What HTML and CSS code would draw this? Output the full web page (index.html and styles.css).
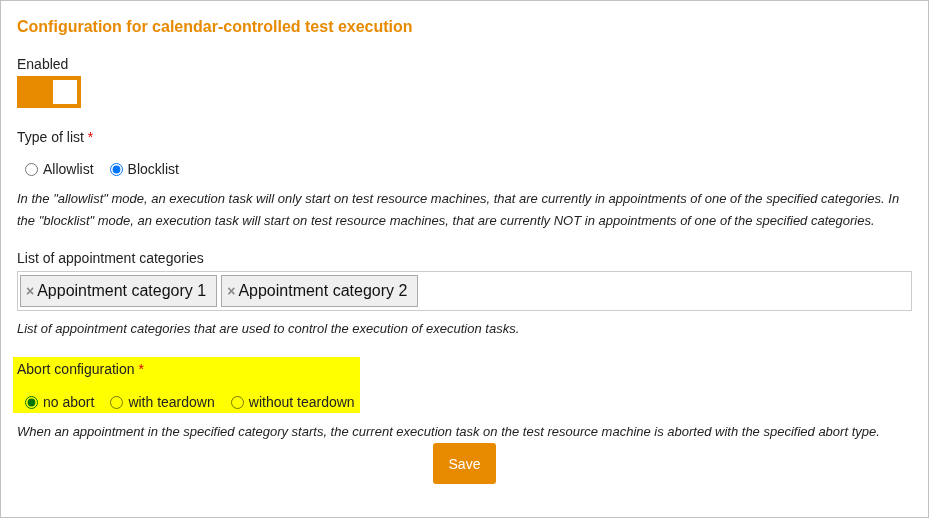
FILE: index.html
```html
<!DOCTYPE html>
<html lang="en">
<head>
<meta charset="utf-8">
<title>Configuration</title>
<link rel="stylesheet" href="styles.css">
</head>
<body>
<div class="panel">
  <h1 class="title">Configuration for calendar-controlled test execution</h1>

  <div class="label label-enabled">Enabled</div>
  <div class="toggle"><span class="knob"></span></div>

  <div class="label label-type">Type of list <span class="req">*</span></div>
  <div class="radio-row">
    <label class="opt"><input type="radio" name="listtype">Allowlist</label>
    <label class="opt"><input type="radio" name="listtype" checked>Blocklist</label>
  </div>
  <p class="desc desc-type">In the "allowlist" mode, an execution task will only start on test resource machines, that are currently in appointments of one of the specified categories. In the "blocklist" mode, an execution task will start on test resource machines, that are currently NOT in appointments of one of the specified categories.</p>

  <div class="label label-list">List of appointment categories</div>
  <div class="tagbox">
    <span class="tag"><span class="tag-x">×</span>Appointment category 1</span>
    <span class="tag"><span class="tag-x">×</span>Appointment category 2</span>
  </div>
  <p class="desc desc-help">List of appointment categories that are used to control the execution of execution tasks.</p>

  <div class="highlight">
    <div class="label">Abort configuration <span class="req">*</span></div>
    <div class="radio-row radio-row-abort">
      <label class="opt"><input type="radio" name="abort" checked>no abort</label>
      <label class="opt"><input type="radio" name="abort">with teardown</label>
      <label class="opt"><input type="radio" name="abort">without teardown</label>
    </div>
  </div>
  <p class="desc desc-abort">When an appointment in the specified category starts, the current execution task on the test resource machine is aborted with the specified abort type.</p>

  <button class="save" type="button">Save</button>
</div>
</body>
</html>
```

FILE: styles.css
```css
html, body {
  margin: 0;
  padding: 0;
  background: #ffffff;
}

body {
  font-family: "Liberation Sans", Arial, sans-serif;
  font-size: 14px;
  line-height: 16px;
  color: #222222;
}

.panel {
  box-sizing: border-box;
  width: 929px;
  height: 518px;
  border: 1px solid #c0c0c0;
  padding: 17px 16px 0 16px;
}

.title {
  margin: 0;
  font-size: 16px;
  line-height: 18px;
  font-weight: bold;
  color: #e88a00;
}

.label {
  line-height: 16px;
}

.label-enabled {
  margin-top: 20px;
}

.req {
  color: #e00000;
}

.toggle {
  box-sizing: border-box;
  margin-top: 4px;
  width: 64px;
  height: 32px;
  padding: 4px;
  background: #e88a00;
  display: flex;
  justify-content: flex-end;
}

.knob {
  display: block;
  width: 24px;
  height: 24px;
  background: #ffffff;
}

.label-type {
  margin-top: 21px;
}

.radio-row {
  margin-top: 16px;
  height: 16px;
  display: flex;
  align-items: center;
  gap: 8px;
}

.opt {
  display: inline-flex;
  align-items: center;
  height: 16px;
}

.opt input {
  width: 13px;
  height: 13px;
  margin: 0 5px 0 8px;
}

.desc {
  margin: 0;
  font-size: 13px;
  line-height: 22px;
  font-style: italic;
  color: #222222;
}

.desc-type {
  margin-top: 11px;
}

.label-list {
  margin-top: 18px;
}

.tagbox {
  margin-top: 5px;
  box-sizing: border-box;
  height: 40px;
  border: 1px solid #cccccc;
  padding: 3px 2px;
  display: flex;
  gap: 4px;
}

.tag {
  box-sizing: border-box;
  height: 32px;
  display: inline-flex;
  align-items: center;
  padding: 0 10px 0 5px;
  border: 1px solid #aaaaaa;
  background: #efefef;
  font-size: 16px;
  line-height: 18px;
  color: #111111;
}

.tag-x {
  color: #888888;
  font-size: 14px;
  font-weight: bold;
  margin-right: 3px;
}

.desc-help {
  margin-top: 7px;
}

.highlight {
  margin-top: 17px;
  margin-left: -4px;
  width: fit-content;
  padding: 4px 5px 3px 4px;
  background: #ffff00;
}

.radio-row-abort {
  margin-top: 17px;
}

.radio-row-abort input {
  mix-blend-mode: multiply;
}

.desc-abort {
  margin-top: 8px;
}

.save {
  display: block;
  margin: 0 auto;
  width: 63px;
  height: 41px;
  border: none;
  border-radius: 3px;
  background: #e88a00;
  color: #ffffff;
  font-family: "Liberation Sans", Arial, sans-serif;
  font-size: 14px;
  padding: 0;
}
```
